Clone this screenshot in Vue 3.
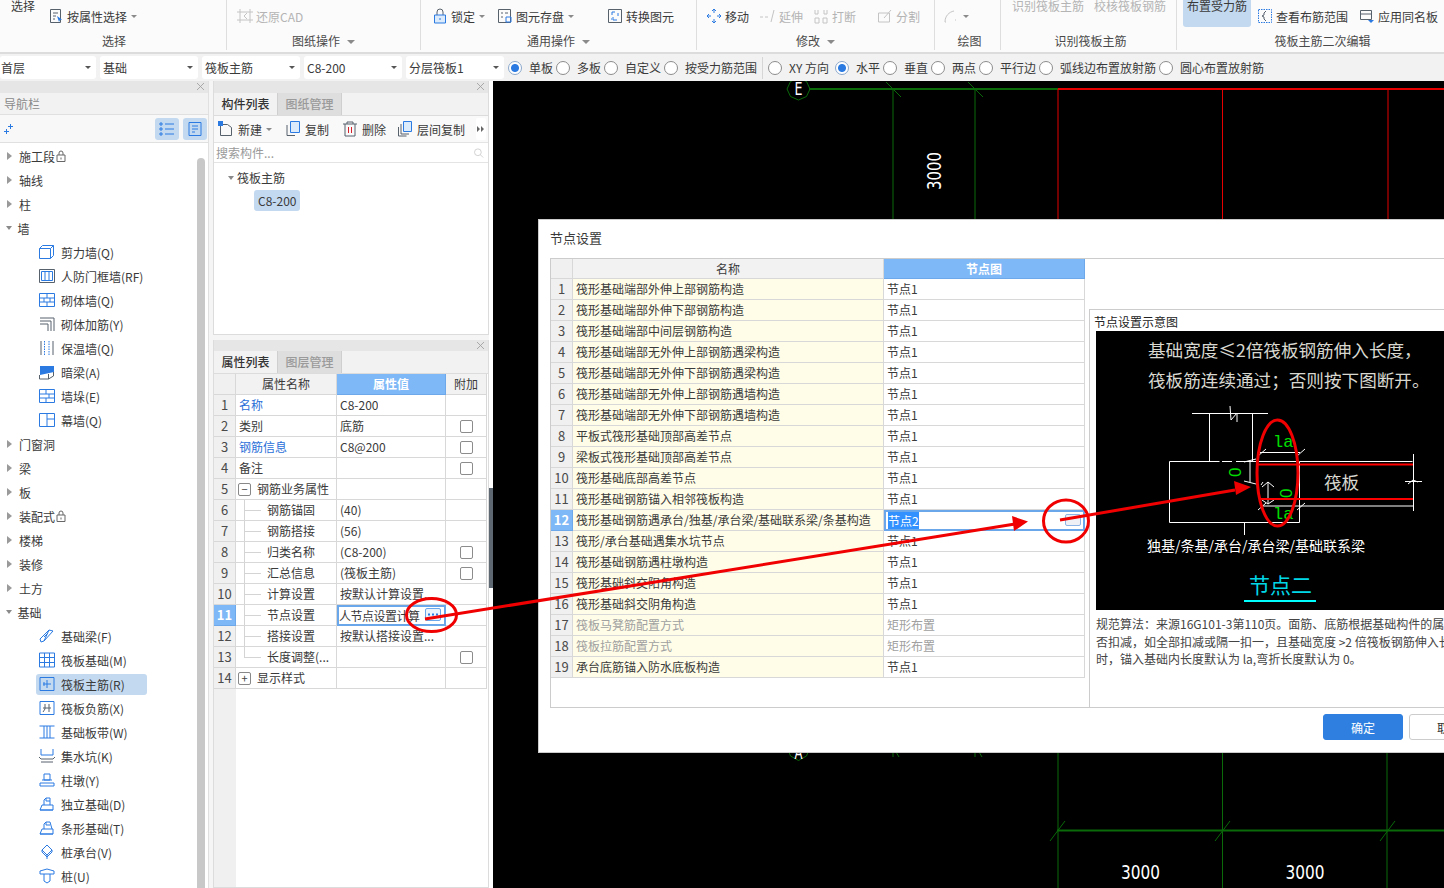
<script setup>
const icons = {
  sel: [['M2.5 1.5h10v13h-10z', 'k'], ['M5 5h5M5 8h3M5 11h2', 'k'], ['M9 8l5 3.5-2 .5-1 2z', 'f']],
  cad: [['M3 1v14M13 1v14M0 4h16M0 12h16M10 5l-3 3 3 3', 'g']],
  lock: [['M5 7V4a3 3 0 0 1 6 0v3', 'k'], ['M2.5 7h11v8h-11z', 'lb'], ['M8 10v2', 'b']],
  save: [['M1.5 1.5h12v13h-12z', 'k'], ['M4 5h2M8 5h3M4 9h2', 'k'], ['M9 9h5v5h-5z', 'b']],
  conv: [['M1.5 1.5h13v13h-13z', 'k'], ['M5 7V4h3M6 9v3h4M11 5v3M4 11h1', 'b']],
  move: [['M8 1v4M8 11v4M1 8h4M11 8h4M8 1L6 3M8 1l2 2M8 15l-2-2M8 15l2-2M1 8l2-2M1 8l2 2M15 8l-2-2M15 8l-2 2', 'b']],
  extend: [['M0 9h3M5 9h3M14 2l-3 12', 'g']],
  cut: [['M2 2v4M5 2v4M2 6h3M2 10h4v5h-4zM10 10h4v5h-4zM11 2v4M14 2v4M11 6h3', 'g']],
  split: [['M1.5 5h11v9h-11z', 'g'], ['M7 10l7-8', 'g']],
  arc: [['M2 14c0-6 4-10 9-11', 'g'], ['M2 14h1M12 12h1', 'g']],
  view: [['M1.5 1.5h13v13h-13z', 'bd'], ['M9 3L7 5v2l-2 1 2 1v2l2 2', 'k']],
  same: [['M1.5 2.5h11v9h-11zM1.5 6h11', 'k'], ['M9 12h6l-3 3z', 'f']],
  news: [['M2.5 3.5h7l4 3v8h-11z', 'k'], ['M0 0h5v5H0z', 'f']],
  copy: [['M5.5 .5h9v11h-9z', 'lb'], ['M2 4v10.5h8', 'k']],
  del: [['M1 3h14M5 3V1h6v2M3 3v12h10V3', 'k'], ['M6.5 6v6M9.5 6v6', 'r']],
  lcopy: [['M6.5 .5h8v10h-8z', 'lb'], ['M4 3v10h8M1.5 6v9h8', 'k']],
  find: [['M11 7A4.5 4.5 0 1 1 2 7a4.5 4.5 0 0 1 9 0zM10 10.500l3.500 3.500', 'g']],
  shear: [['M.5 4.500h11v10h-11zM.5 4.500l3-3h11v10l-3 3M11.500 4.500l3-3', 'b']],
  door: [['M.5 1.500h15v13H.5z', 'k'], ['M2.500 3.500h11v9h-11zM6 3.500v9M10 3.500v9', 'b']],
  brick: [['M.5 1.500h15v13H.5zM.5 6h15M.5 10h15M8 1.500V6M5 6v4M11 6v4M8 10v4.500', 'b']],
  bar: [['M1 2h14v13M1 5h11v10M1 8h8v7', 'k']],
  warm: [['M2 1v14M14 1v14', 'k'], ['M5.500 1v14M10 1v14', 'bd']],
  hidden: [['M1 2h14v6L1 11z', 'f'], ['M.5 11v4h9l5-3V8M9.500 10v5', 'k']],
  pier: [['M.5 1.500h15v13H.5zM.5 6h15M.5 10h15M7 1.500V6M10 6v4M7 10v4.500', 'b']],
  curtain: [['M.5 1.500h15v13H.5zM8 1.500v13M8 7h7.500', 'b']],
  beam: [['M1 11l9-9 4 1-9 10-3 1zM5 9l4-4M10 2l-5 11', 'b']],
  raft: [['M.5 1h15v14H.5zM5.500 1v14M10.500 1v14M.5 5.500h15M.5 10.500h15', 'b']],
  main: [['M1 1.500h14v13H1z', 'b'], ['M8 4v8M4 8h8M5 6v4', 'b']],
  neg: [['M1 1.500h14v13H1z', 'b'], ['M6 4v5l-2 3M10 4v8M4 8h8', 'k']],
  strip: [['M.5 2h15M.5 14h15M5 2v12M8 2v12M11 2v12', 'b']],
  sump: [['M2 1v6h12V1', 'b'], ['M0 9l2 2h12l2-2M2 14h12', 'k']],
  col: [['M5 2h6v6H5zM3 8h10M1 11h14v3H1z', 'b']],
  iso: [['M5 9V4l2-2h4v7', 'b'], ['M1 14l2-5h11v5zM1 14h13M7 2v3h4', 'b']],
  bar2: [['M5 9V4l2-2h4l2 7', 'b'], ['M1 14l2-5h11v5zM1 14h13M7 2v3h4', 'b']],
  cap: [['M8 1l5 5-5 5-5-5zM3 6v2l5 5 5-5V6M8 11v4', 'b']],
  pile: [['M1 3l7-2 7 2v3H1zM5 6v7l3 2 3-2V6', 'b']]
}

const ribbon = [
  { w: 227, label: '选择', shift: 2, pad: 48, items: [{ text: '按属性选择', icon: 'sel', caret: true }], top: [{ text: '选择', x: 11 }] },
  { w: 194, label: '图纸操作', labelCaret: true, pad: 10, items: [{ text: '还原CAD', icon: 'cad', off: true }] },
  { w: 276, label: '通用操作', labelCaret: true, pad: 11, items: [
    { text: '锁定', icon: 'lock', caret: true },
    { text: '图元存盘', icon: 'save', caret: true, gap: 12 },
    { text: '转换图元', icon: 'conv', gap: 33 }
  ] },
  { w: 238, label: '修改', labelCaret: true, pad: 9, items: [
    { text: '移动', icon: 'move' },
    { text: '延伸', icon: 'extend', off: true, gap: 11 },
    { text: '打断', icon: 'cut', off: true, gap: 10 },
    { text: '分割', icon: 'split', off: true, gap: 21 }
  ] },
  { w: 66, label: '绘图', shift: 4, pad: 8, items: [{ text: '', icon: 'arc', caret: true, off: true }] },
  { w: 176, label: '识别筏板主筋', shift: 4, pad: 0, items: [], top: [{ text: '识别筏板主筋', x: 11, off: true }, { text: '校核筏板钢筋', x: 10, off: true }] },
  { w: 267, label: '筏板主筋二次编辑', shift: 24, pad: 80, items: [
    { text: '查看布筋范围', icon: 'view' },
    { text: '应用同名板', icon: 'same', gap: 11 }
  ], active: '布置受力筋' }
]

const combos = ['首层', '基础', '筏板主筋', 'C8-200', '分层筏板1']
const radios1 = [
  { text: '单板', on: true }, { text: '多板' }, { text: '自定义' }, { text: '按受力筋范围' }
]
const radios2 = [
  { text: 'XY 方向' }, { text: '水平', on: true }, { text: '垂直' }, { text: '两点' },
  { text: '平行边' }, { text: '弧线边布置放射筋' }, { text: '圆心布置放射筋' }
]

const navRows = [
  { text: '施工段', tw: 'r', lock: true }, { text: '轴线', tw: 'r' }, { text: '柱', tw: 'r' }, { text: '墙', tw: 'd' },
  { text: '剪力墙(Q)', icon: 'shear' }, { text: '人防门框墙(RF)', icon: 'door' }, { text: '砌体墙(Q)', icon: 'brick' },
  { text: '砌体加筋(Y)', icon: 'bar' }, { text: '保温墙(Q)', icon: 'warm' }, { text: '暗梁(A)', icon: 'hidden' },
  { text: '墙垛(E)', icon: 'pier' }, { text: '幕墙(Q)', icon: 'curtain' },
  { text: '门窗洞', tw: 'r' }, { text: '梁', tw: 'r' }, { text: '板', tw: 'r' }, { text: '装配式', tw: 'r', lock: true },
  { text: '楼梯', tw: 'r' }, { text: '装修', tw: 'r' }, { text: '土方', tw: 'r' }, { text: '基础', tw: 'd' },
  { text: '基础梁(F)', icon: 'beam' }, { text: '筏板基础(M)', icon: 'raft' }, { text: '筏板主筋(R)', icon: 'main', active: true },
  { text: '筏板负筋(X)', icon: 'neg' }, { text: '基础板带(W)', icon: 'strip' }, { text: '集水坑(K)', icon: 'sump' },
  { text: '柱墩(Y)', icon: 'col' }, { text: '独立基础(D)', icon: 'iso' }, { text: '条形基础(T)', icon: 'bar2' },
  { text: '桩承台(V)', icon: 'cap' }, { text: '桩(U)', icon: 'pile' }
]

const compTools = [
  { text: '新建', icon: 'news', caret: true },
  { text: '复制', icon: 'copy', gap: 13 },
  { text: '删除', icon: 'del', gap: 13 },
  { text: '层间复制', icon: 'lcopy', gap: 11 }
]

const propRows = [
  { name: '名称', val: 'C8-200', link: true },
  { name: '类别', val: '底筋', cb: true },
  { name: '钢筋信息', val: 'C8@200', link: true, cb: true },
  { name: '备注', val: '', cb: true },
  { name: '钢筋业务属性', val: '', tog: '−' },
  { name: '钢筋锚固', val: '(40)', child: true },
  { name: '钢筋搭接', val: '(56)', child: true },
  { name: '归类名称', val: '(C8-200)', child: true, cb: true },
  { name: '汇总信息', val: '(筏板主筋)', child: true, cb: true },
  { name: '计算设置', val: '按默认计算设置...', child: true },
  { name: '节点设置', val: '人节点设置计算', child: true, active: true },
  { name: '搭接设置', val: '按默认搭接设置...', child: true },
  { name: '长度调整(...', val: '', child: true, cb: true, last: true },
  { name: '显示样式', val: '', tog: '+' }
]

const nodeRows = [
  ['筏形基础端部外伸上部钢筋构造', '节点1'],
  ['筏形基础端部外伸下部钢筋构造', '节点1'],
  ['筏形基础端部中间层钢筋构造', '节点1'],
  ['筏形基础端部无外伸上部钢筋遇梁构造', '节点1'],
  ['筏形基础端部无外伸下部钢筋遇梁构造', '节点1'],
  ['筏形基础端部无外伸上部钢筋遇墙构造', '节点1'],
  ['筏形基础端部无外伸下部钢筋遇墙构造', '节点1'],
  ['平板式筏形基础顶部高差节点', '节点1'],
  ['梁板式筏形基础顶部高差节点', '节点1'],
  ['筏形基础底部高差节点', '节点1'],
  ['筏形基础钢筋锚入相邻筏板构造', '节点1'],
  ['筏形基础钢筋遇承台/独基/承台梁/基础联系梁/条基构造', '节点2'],
  ['筏形/承台基础遇集水坑节点', '节点1'],
  ['筏形基础钢筋遇柱墩构造', '节点1'],
  ['筏形基础斜交阳角构造', '节点1'],
  ['筏形基础斜交阴角构造', '节点1'],
  ['筏板马凳筋配置方式', '矩形布置'],
  ['筏板拉筋配置方式', '矩形布置'],
  ['承台底筋锚入防水底板构造', '节点1']
]
</script>

<template>
  <div class="app">
    <div class="ribbon">
      <div v-for="g in ribbon" :key="g.label" class="group" :style="{ width: g.w + 'px' }">
        <div class="cut-row">
          <span v-for="t in g.top" :key="t.text" class="cut-text" :class="{ off: t.off }" :style="{ marginLeft: t.x + 'px' }">{{ t.text }}</span>
          <span v-if="g.active" class="cut-active">{{ g.active }}</span>
        </div>
        <div class="tools" :style="{ paddingLeft: g.pad + 'px' }">
          <div v-for="it in g.items" :key="it.icon" class="tool" :class="{ off: it.off }" :style="{ marginLeft: (it.gap || 0) + 'px' }">
            <svg class="ico" viewBox="0 0 16 16"><path v-for="(p, i) in icons[it.icon]" :key="i" :d="p[0]" :class="p[1]" /></svg>
            <span v-if="it.text">{{ it.text }}</span>
            <i v-if="it.caret" class="caret"></i>
          </div>
        </div>
        <div class="group-label" :style="{ paddingLeft: (g.shift || 0) + 'px' }">{{ g.label }}<i v-if="g.labelCaret" class="caret big"></i></div>
      </div>
    </div>

    <div class="optbar">
      <div v-for="c in combos" :key="c" class="combo">{{ c }}<i class="caret dark"></i></div>
      <div v-for="r in radios1" :key="r.text" class="radio-item">
        <span class="radio" :class="{ on: r.on }"></span>{{ r.text }}
      </div>
      <span class="opt-sep"></span>
      <div v-for="r in radios2" :key="r.text" class="radio-item">
        <span class="radio" :class="{ on: r.on }"></span>{{ r.text }}
      </div>
    </div>

    <div class="main">
      <div class="nav">
        <div class="strip"><svg class="close" viewBox="0 0 8 8"><path d="M0 0l8 8M8 0L0 8" /></svg></div>
        <div class="nav-title">导航栏</div>
        <div class="nav-tools">
          <svg class="ico spark" viewBox="0 0 10 10"><path d="M6.500 0v5M4 2.500h5M2.500 5v5M0 7.500h5" class="b" /></svg>
          <span class="view-btn">
            <svg class="ico" viewBox="0 0 16 16"><path d="M6 3h9M6 8h9M6 13h9" class="b" /><path d="M1 2h2v2H1zM1 7h2v2H1zM1 12h2v2H1z" class="b" /></svg>
          </span>
          <span class="view-btn">
            <svg class="ico" viewBox="0 0 16 16"><path d="M2 1.500h12v13H2zM5 5h6M5 8h6M5 11h3" class="b" /></svg>
          </span>
        </div>
        <div class="nav-tree">
          <div v-for="r in navRows" :key="r.text" class="nav-row">
            <template v-if="r.tw">
              <i class="tw" :class="r.tw"></i>
              <span>{{ r.text }}</span>
              <svg v-if="r.lock" class="mini-lock" viewBox="0 0 10 12"><path d="M1 5h8v6.500H1zM3 5V3a2 2 0 0 1 4 0v2M5 7.500v2" /></svg>
            </template>
            <div v-else class="nav-item" :class="{ active: r.active }">
              <svg class="ico" viewBox="0 0 16 16"><path v-for="(p, i) in icons[r.icon]" :key="i" :d="p[0]" :class="p[1]" /></svg>
              <span>{{ r.text }}</span>
            </div>
          </div>
        </div>
        <div class="nav-scroll"></div>
      </div>

      <div class="mid">
        <div class="panel comp-panel">
          <div class="strip"><svg class="close" viewBox="0 0 8 8"><path d="M0 0l8 8M8 0L0 8" /></svg></div>
          <div class="tabs">
            <span class="tab on">构件列表</span>
            <span class="tab">图纸管理</span>
          </div>
          <div class="comp-tools">
            <div v-for="t in compTools" :key="t.text" class="tool" :style="{ marginLeft: (t.gap || 0) + 'px' }">
              <svg class="ico" viewBox="0 0 16 16"><path v-for="(p, i) in icons[t.icon]" :key="i" :d="p[0]" :class="p[1]" /></svg>
              <span class="tool-label">{{ t.text }}</span>
              <i v-if="t.caret" class="caret"></i>
            </div>
            <span class="more"><svg viewBox="0 0 8 6"><path d="M0 0l3 3-3 3zM4 0l3 3-3 3z" /></svg></span>
          </div>
          <div class="search">
            <span>搜索构件...</span>
            <svg class="ico find" viewBox="0 0 16 16"><path v-for="(p, i) in icons.find" :key="i" :d="p[0]" :class="p[1]" /></svg>
          </div>
          <div class="comp-tree">
            <div class="comp-root"><i class="tw d"></i>筏板主筋</div>
            <span class="comp-chip">C8-200</span>
          </div>
        </div>

        <div class="panel prop-panel">
          <div class="strip small"><svg class="close" viewBox="0 0 8 8"><path d="M0 0l8 8M8 0L0 8" /></svg></div>
          <div class="tabs">
            <span class="tab on">属性列表</span>
            <span class="tab">图层管理</span>
          </div>
          <div class="ptable">
            <div class="cell head idx"></div>
            <div class="cell head">属性名称</div>
            <div class="cell head hot">属性值</div>
            <div class="cell head">附加</div>
            <template v-for="(r, i) in propRows" :key="r.name">
              <div class="cell idx" :class="{ hot: r.active }">{{ i + 1 }}</div>
              <div class="cell pname" :class="{ link: r.link, child: r.child, last: r.last }">
                <span v-if="r.tog" class="tog">{{ r.tog }}</span>{{ r.name }}
              </div>
              <div class="cell pval" :class="{ editing: r.active }">
                <span class="pval-text">{{ r.val }}</span>
                <span v-if="r.active" class="dots"><svg viewBox="0 0 14 10"><path d="M2 4h2v2H2zM6 4h2v2H6zM10 4h2v2h-2z" /></svg></span>
              </div>
              <div class="cell pextra"><span v-if="r.cb" class="check"></span></div>
            </template>
          </div>
        </div>
      </div>

      <div class="splitter"><span class="handle"></span></div>

      <div class="canvas">
        <svg class="cad" viewBox="493 81 951 807">
          <g class="dim">
            <path d="M893 89v130M975 89v130M893 753v4M975 753v4" />
            <path d="M886 82l15 15M968 82l15 15M896 752l3 5M979 752l3 5" />
            <path class="thick" d="M809 89h249" />
            <path d="M1058 753V888M1222.500 753V888M1387 753V888" />
            <path class="thick" d="M1057 830.500h387" />
            <path d="M1050 841l15-20M1215 841l15-20M1380 841l15-20" />
            <path d="M798.500 78l8 3.500 3.500 7.500-3.500 7.500-8 3.500-8-3.500-3.500-7.500 3.500-7.500z" />
            <path d="M798.500 738l8 3.500 3 7-3 7.500-8 4.500-8-4.500-3-7.500 3-7z" />
          </g>
          <path class="red" d="M1058 89v130M1222.500 89v130M1388 89v130" />
          <path class="red thick" d="M1058 89h386" />
          <text class="cad-letter" x="794.500" y="95" textLength="8" lengthAdjust="spacingAndGlyphs">E</text>
          <text class="cad-letter" x="794.500" y="759" textLength="8" lengthAdjust="spacingAndGlyphs">A</text>
          <text class="cad-num" transform="translate(941 190) rotate(-90)" textLength="38" lengthAdjust="spacingAndGlyphs">3000</text>
          <text class="cad-num" x="1121" y="879" textLength="39" lengthAdjust="spacingAndGlyphs">3000</text>
          <text class="cad-num" x="1285.500" y="879" textLength="39" lengthAdjust="spacingAndGlyphs">3000</text>
        </svg>
      </div>
    </div>

    <div class="dialog">
      <div class="dlg-title">节点设置</div>
      <div class="dlg-body">
        <div class="ntable">
          <div class="cell head idx"></div>
          <div class="cell head">名称</div>
          <div class="cell head hot">节点图</div>
          <template v-for="(r, i) in nodeRows" :key="i">
            <div class="cell idx" :class="{ hot: i === 11 }">{{ i + 1 }}</div>
            <div class="cell nname" :class="{ dim: i === 16 || i === 17 }">{{ r[0] }}</div>
            <div class="cell nval" :class="{ dim: i === 16 || i === 17, editing: i === 11 }">
              <span :class="{ picked: i === 11 }">{{ r[1] }}</span>
              <span v-if="i === 11" class="nbtn"></span>
            </div>
          </template>
        </div>
        <div class="preview">
          <div class="preview-title">节点设置示意图</div>
          <svg class="sketch" viewBox="1096 331 360 279">
            <text class="sk-note" x="1148" y="357">基础宽度≤2倍筏板钢筋伸入长度，</text>
            <text class="sk-note" x="1148" y="387">筏板筋连续通过；否则按下图断开。</text>
            <path class="sk-line" d="M1192 413.500h76M1209.500 413.500V461M1252.500 413.500V461M1230 406l1 14 6-7 0 9" />
            <path class="sk-line" d="M1169.500 461.500h50M1222 461.500h10M1236 461.500h62M1169.500 461.500v61h130v-61" />
            <path class="sk-line" d="M1299.500 461.500h113M1260 452.500h40M1261 506h152M1413.500 454v57M1405 481.500h17M1408 484l5-4 5 2" />
            <path class="sk-line" d="M1250 461v21M1263 482l-2 3M1244 462l12 -3M1244 481l12 3M1268 482v22M1262 487l6-5 6 5M1262 500l6 4 6-4M1258 510l8-7M1297 510l8-7M1258 456l8-7M1297 456l8-7" />
            <path class="sk-line" d="M1244.500 523v12" />
            <path class="sk-red" d="M1258 464.500h155M1260 499h153" />
            <text class="sk-green" x="1273" y="447">la</text>
            <text class="sk-green" x="1273" y="519">la</text>
            <text class="sk-green sm" transform="translate(1235 472) rotate(-90) translate(-5 5.500)">0</text>
            <text class="sk-green sm" transform="translate(1286 493) rotate(-90) translate(-5 5.500)">0</text>
            <text class="sk-note" x="1324" y="489">筏板</text>
            <text class="sk-base" x="1147" y="551">独基/条基/承台/承台梁/基础联系梁</text>
            <text class="sk-node" x="1249" y="593">节点二</text>
            <path class="sk-under" d="M1244 601h72" />
          </svg>
          <div class="note">规范算法：来源16G101-3第110页。面筋、底筋根据基础构件的属性判断是<br>否扣减，如全部扣减或隔一扣一，且基础宽度 &gt;2 倍筏板钢筋伸入长度<br>时，锚入基础内长度默认为 la,弯折长度默认为 0。</div>
        </div>
      </div>
      <div class="dlg-foot">
        <button class="btn primary">确定</button>
        <button class="btn">取消</button>
      </div>
    </div>

    <svg class="marks" viewBox="0 0 1444 888">
      <ellipse cx="431.500" cy="615" rx="25" ry="16.500" />
      <ellipse cx="1066" cy="521" rx="22.500" ry="21" />
      <ellipse cx="1277.500" cy="473" rx="20.500" ry="53" />
      <path d="M425 619L1015 524M1060 520L1235 490" />
      <path class="head" d="M1028 521.500L1012 516l2 15zM1251 487L1234 481l2 14z" />
    </svg>
  </div>
</template>

<style scoped>
.app {
  position: relative;
  width: 1444px;
  height: 888px;
  overflow: hidden;
  display: flex;
  flex-direction: column;
  font-family: "Noto Sans CJK SC", "Noto Sans", sans-serif;
  font-size: 12px;
  color: #3a3a3a;
  background: #f5f5f5;
}

.ico {
  width: 16px;
  height: 16px;
  flex: none;
  fill: none;
  stroke-width: 1;
}
.ico .b { stroke: #2a7ae2; }
.ico .bd { stroke: #2a7ae2; stroke-dasharray: 1.500 1; }
.ico .k { stroke: #56616c; }
.ico .g { stroke: #c4c4c4; }
.ico .r { stroke: #d6202a; }
.ico .f { fill: #2a7ae2; stroke: none; }
.ico .lb { fill: #dcebfb; stroke: #2a7ae2; }

.ribbon {
  height: 54px;
  flex: none;
  display: flex;
  background: #fbfbfb;
  border-bottom: 2px solid #dcdcdc;
  box-sizing: border-box;
}
.group {
  position: relative;
  flex: none;
  height: 50px;
  box-sizing: border-box;
  border-right: 1px solid #dedede;
  display: flex;
  flex-direction: column;
}
.group:last-child { border-right: none; }
.cut-row {
  position: absolute;
  top: -3px;
  left: 0;
  display: flex;
  line-height: 17px;
}
.cut-text.off { color: #b4b4b4; }
.cut-active {
  margin-left: 6px;
  margin-top: 3px;
  width: 68px;
  height: 27px;
  border-radius: 0 0 3px 3px;
  background: #c3d9f0;
  text-align: center;
  line-height: 11px;
  white-space: nowrap;
}
.tools {
  height: 32px;
  display: flex;
  align-items: center;
  flex: none;
}
.tool {
  display: flex;
  align-items: center;
  gap: 3px;
  white-space: nowrap;
}
.tool.off { color: #b4b4b4; }
.group-label {
  height: 17px;
  line-height: 17px;
  text-align: center;
  color: #4a4a4a;
}
.caret {
  display: inline-block;
  width: 0;
  height: 0;
  margin-left: 1px;
  border-left: 3px solid transparent;
  border-right: 3px solid transparent;
  border-top: 3px solid #8a8a8a;
}
.caret.big {
  margin-left: 7px;
  vertical-align: 2px;
  border-left-width: 4px;
  border-right-width: 4px;
  border-top-width: 4px;
}
.caret.dark { border-top-color: #555; margin-left: auto; margin-right: 5px; }

.optbar {
  height: 27px;
  flex: none;
  display: flex;
  align-items: center;
  gap: 4px;
  background: #f2f2f2;
  box-sizing: border-box;
}
.combo {
  width: 98px;
  height: 23px;
  flex: none;
  box-sizing: border-box;
  display: flex;
  align-items: center;
  padding-left: 3px;
  background: #fff;
  border-radius: 3px;
  line-height: 23px;
}
.combo:first-child { width: 96px; padding-left: 1px; }
.radio-item {
  display: flex;
  align-items: center;
  white-space: nowrap;
  margin-right: -1px;
}
.radio-item:nth-child(11) { margin-right: 2px; }
.radio {
  width: 14px;
  height: 14px;
  box-sizing: border-box;
  margin-right: 7px;
  border: 1px solid #8c8c8c;
  border-radius: 50%;
  background: #fff;
}
.radio.on {
  border-color: #8aa8cc;
  background: radial-gradient(circle, #2a7ae2 3.500px, #fff 4.500px);
}
.opt-sep {
  width: 1px;
  height: 22px;
  margin: 0 1px 0 2px;
  background: #d6d6d6;
}

.main {
  flex: 1;
  display: flex;
  min-height: 0;
}
.strip {
  height: 12px;
  flex: none;
  position: relative;
  background: #e6e6e6;
}
.strip.small { height: 11px; }
.close {
  position: absolute;
  right: 4px;
  top: 2px;
  width: 7px;
  height: 7px;
  fill: none;
  stroke: #a0a0a0;
  stroke-width: 1;
}

.nav {
  position: relative;
  width: 209px;
  flex: none;
  margin-right: 4px;
  background: #fff;
  box-sizing: border-box;
  border-right: 1px solid #e0e0e0;
  overflow: hidden;
}
.nav-title {
  height: 22px;
  line-height: 22px;
  padding-left: 4px;
  color: #8a8a8a;
  background: #f2f2f2;
  border-bottom: 1px solid #e0e0e0;
  box-sizing: border-box;
}
.nav-tools {
  height: 28px;
  display: flex;
  align-items: center;
  gap: 4px;
  padding-right: 1px;
  background: #f8f8f8;
  border-bottom: 1px solid #e0e0e0;
  box-sizing: border-box;
}
.spark { width: 10px; height: 10px; margin-left: 4px; margin-right: auto; }
.view-btn {
  width: 24px;
  height: 22px;
  display: flex;
  align-items: center;
  justify-content: center;
  background: #c3d9f0;
  border-radius: 3px;
}
.nav-tree { padding-top: 1px; }
.nav-row {
  height: 24px;
  display: flex;
  align-items: center;
  white-space: nowrap;
}
.tw {
  width: 0;
  height: 0;
  flex: none;
}
.tw.r {
  margin: 0 7px 0 7px;
  border-top: 4px solid transparent;
  border-bottom: 4px solid transparent;
  border-left: 5px solid #9a9a9a;
}
.tw.d {
  margin: 0 5.500px 0 6px;
  border-left: 3.500px solid transparent;
  border-right: 3.500px solid transparent;
  border-top: 4px solid #8a8a8a;
}
.mini-lock {
  width: 10px;
  height: 12px;
  margin-left: 1px;
  fill: none;
  stroke: #666;
}
.nav-item {
  width: 111px;
  height: 21px;
  margin-left: 36px;
  padding-left: 3px;
  box-sizing: border-box;
  display: flex;
  align-items: center;
  gap: 6px;
  border-radius: 3px;
}
.nav-item.active { background: #c3d9f0; }
.nav-scroll {
  position: absolute;
  top: 77px;
  right: 3px;
  width: 8px;
  height: 740px;
  background: #c8c8c8;
  border-radius: 4px 4px 0 0;
}

.mid {
  width: 276px;
  flex: none;
  display: flex;
  flex-direction: column;
  gap: 5px;
}
.panel {
  background: #fff;
  box-sizing: border-box;
  border: 1px solid #dcdcdc;
  border-top: none;
  display: flex;
  flex-direction: column;
}
.comp-panel { height: 254px; flex: none; }
.prop-panel { flex: 1; min-height: 0; }
.tabs {
  display: flex;
  flex: none;
  height: 23px;
  background: #f2f2f2;
  border-bottom: 1px solid #dcdcdc;
  box-sizing: border-box;
}
.tab {
  width: 64px;
  text-align: center;
  line-height: 22px;
  color: #9a9a9a;
  font-weight: 500;
  background: #dedede;
  border-right: 1px solid #cfcfcf;
  box-sizing: border-box;
}
.tab.on {
  color: #333;
  background: #f2f2f2;
}
.comp-tools {
  position: relative;
  height: 27px;
  flex: none;
  display: flex;
  align-items: center;
  padding-left: 4px;
  background: #f9f9f9;
  border-bottom: 1px solid #e4e4e4;
  box-sizing: border-box;
}
.tool-label { margin-left: 1px; }
.more {
  position: absolute;
  right: 2px;
  top: 2px;
  width: 10px;
  height: 22px;
  display: flex;
  align-items: center;
  justify-content: center;
  background: #fff;
  border-radius: 2px;
}
.more svg { width: 8px; height: 6px; fill: #666; }
.search {
  height: 20px;
  flex: none;
  display: flex;
  align-items: center;
  justify-content: space-between;
  padding: 0 3px 0 2px;
  color: #9a9a9a;
  border-bottom: 1px solid #e4e4e4;
  box-sizing: border-box;
}
.find { width: 12px; height: 12px; }
.comp-tree { padding-top: 3px; }
.comp-root {
  height: 24px;
  line-height: 24px;
  display: flex;
  align-items: center;
  padding-left: 8px;
}
.comp-root .tw { margin-right: 3px; }
.comp-chip {
  display: inline-block;
  margin: 0 0 0 40px;
  padding: 0 4px;
  height: 21px;
  line-height: 21px;
  border-radius: 3px;
  background: #c3d9f0;
}

.ptable {
  flex: 1;
  display: grid;
  grid-template-columns: 22px 101px 109px 41px;
  grid-auto-rows: 21px;
  align-content: start;
  background: linear-gradient(to right, #f0f0f0 22px, #fff 22px);
}
.cell {
  box-sizing: border-box;
  border-right: 1px solid #d8d8d8;
  border-bottom: 1px solid #d8d8d8;
  line-height: 20px;
  white-space: nowrap;
  overflow: hidden;
  position: relative;
}
.cell.head { text-align: center; background: #f2f2f2; }
.cell.idx { text-align: center; background: #f0f0f0; font-size: 13px; color: #4a4a4a; }
.cell.hot { background: #7fb8f7; color: #fff; font-weight: 700; border-color: #6ca8ea; }
.pname { padding-left: 3px; display: flex; align-items: center; }
.pname.link { color: #2a6fd8; }
.pname.child { padding-left: 31px; }
.pname.child::before {
  content: "";
  position: absolute;
  left: 8px;
  top: 10px;
  width: 17px;
  height: 1px;
  background: #d4d4d4;
}
.pname.child::after {
  content: "";
  position: absolute;
  left: 8px;
  top: 0;
  bottom: 0;
  width: 1px;
  background: #d4d4d4;
}
.pname.last::after { bottom: 10px; }
.tog {
  width: 11px;
  height: 11px;
  margin-right: 6px;
  margin-left: -1px;
  border: 1px solid #888;
  border-radius: 2px;
  line-height: 10px;
  text-align: center;
  font-size: 11px;
  color: #444;
}
.pval { padding-left: 3px; display: flex; align-items: center; }
.pval.editing { border: 2px solid #6aa6ea; padding-left: 0; letter-spacing: -.5px; }
.pval-text { overflow: hidden; }
.dots {
  position: absolute;
  right: 3px;
  top: 1px;
  width: 16px;
  height: 13px;
  box-sizing: border-box;
  border: 1px solid #6aa6ea;
  border-radius: 2px;
  background: #eaf2fc;
}
.dots svg { display: block; width: 14px; height: 11px; fill: #2a7ae2; }
.pextra { display: flex; align-items: center; justify-content: center; }
.check {
  width: 13px;
  height: 13px;
  box-sizing: border-box;
  border: 1px solid #8c8c8c;
  border-radius: 2px;
  background: #fff;
}

.splitter {
  position: relative;
  width: 4px;
  flex: none;
  background: #fff;
}
.handle {
  position: absolute;
  left: 0;
  top: 407px;
  width: 4px;
  height: 100px;
  background: #5e6872;
}

.canvas {
  flex: 1;
  min-width: 0;
  background: #000;
}
.cad {
  display: block;
  width: 951px;
  height: 807px;
}
.dim path { fill: none; stroke: #0a6a0a; stroke-width: 1; }
.dim path.thick { stroke-width: 2; }
.cad > .red { fill: none; stroke: #e60000; stroke-width: 1; }
.cad > .red.thick { stroke-width: 2; }
.cad-letter {
  font-family: "DejaVu Sans", sans-serif;
  font-size: 17px;
  fill: #fff;
}
.cad-num {
  font-family: "DejaVu Sans", sans-serif;
  font-size: 19px;
  fill: #fff;
}

.dialog {
  position: absolute;
  left: 538px;
  top: 219px;
  width: 1000px;
  height: 534px;
  box-sizing: border-box;
  border: 1px solid #ccc;
  background: #fff;
  display: flex;
  flex-direction: column;
}
.dlg-title {
  height: 38px;
  flex: none;
  padding-left: 11px;
  line-height: 35px;
  font-size: 13px;
}
.dlg-body {
  height: 450px;
  flex: none;
  margin-left: 11px;
  border: 1px solid #ccc;
  border-right: none;
  box-sizing: border-box;
  display: flex;
}
.ntable {
  width: 534px;
  flex: none;
  display: grid;
  grid-template-columns: 22px 311px 201px;
  grid-template-rows: 20px repeat(19, 21px);
  align-content: start;
}
.nname { padding-left: 3px; background: #fffde8; }
.nval { padding-left: 3px; }
.nname.dim, .nval.dim { color: #a0a0a0; }
.nval.editing {
  border: 2px solid #6aa6ea;
  padding-left: 2px;
  line-height: 17px;
}
.picked { background: #3390ff; color: #fff; }
.nbtn {
  position: absolute;
  right: 2px;
  top: 2px;
  width: 16px;
  height: 12px;
  box-sizing: border-box;
  border: 1px solid #8cb4e6;
  border-radius: 2px;
  background: #eef0f6;
}
.preview {
  width: 420px;
  flex: none;
  margin: 50px 0 0 4px;
  border: 1px solid #ccc;
  border-bottom: none;
  box-sizing: border-box;
  padding: 4px 0 0 6px;
}
.preview-title {
  height: 17px;
  line-height: 15px;
  color: #222;
  margin-left: -2px;
}
.sketch {
  display: block;
  width: 360px;
  height: 279px;
  background: #000;
}
.sk-note {
  font-size: 17.600px;
  fill: #d8d8d0;
}
.sk-line { fill: none; stroke: #fff; stroke-width: 1; }
.sk-red { fill: none; stroke: #ff0000; stroke-width: 2; }
.sk-green {
  font-family: "Liberation Mono", monospace;
  font-size: 17px;
  fill: #00e000;
}
.sk-green.sm { font-family: "Liberation Sans", sans-serif; font-size: 17px; }
.sk-base { font-size: 14px; fill: #fff; }
.sk-node { font-size: 21px; fill: #00d8e8; }
.sk-under { fill: none; stroke: #00ffff; stroke-width: 2; }
.note {
  margin-top: 5px;
  line-height: 17.500px;
  white-space: nowrap;
  color: #444;
}
.dlg-foot {
  flex: 1;
  display: flex;
  justify-content: flex-end;
  gap: 6px;
  padding: 6px 48px 0 0;
}
.btn {
  width: 80px;
  height: 26px;
  padding: 0;
  box-sizing: border-box;
  font: inherit;
  color: #333;
  background: #fff;
  border: 1px solid #ccc;
  border-radius: 3px;
}
.btn.primary {
  color: #fff;
  background: #2e7fe0;
  border-color: #2e7fe0;
}

.marks {
  position: absolute;
  left: 0;
  top: 0;
  width: 1444px;
  height: 888px;
  pointer-events: none;
}
.marks ellipse, .marks path {
  fill: none;
  stroke: #f00000;
  stroke-width: 3;
}
.marks path.head { fill: #f00000; stroke: none; }
</style>

<style>
html, body {
  margin: 0;
  overflow: hidden;
}
</style>
